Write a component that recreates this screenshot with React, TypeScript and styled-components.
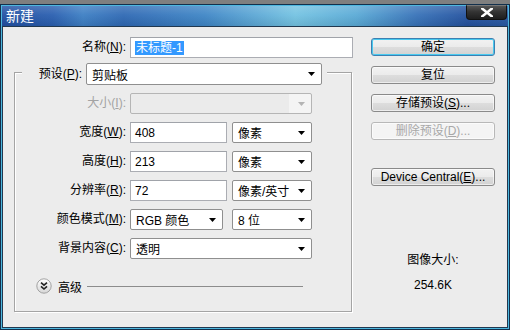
import styled, { createGlobalStyle } from "styled-components";

const GlobalStyle = createGlobalStyle`
  html, body {
    margin: 0;
    padding: 0;
    background: #7f7f7f;
  }
  body {
    font-family: "Liberation Sans", "Noto Sans CJK SC", sans-serif;
    font-size: 12px;
    color: #000;
  }
`;

function Arrow({ disabled }: { disabled?: boolean }) {
  return (
    <svg width="7" height="4" viewBox="0 0 7 4">
      <path d="M0 0 L7 0 L3.5 4 Z" fill={disabled ? "#b4b4b4" : "#000"} />
    </svg>
  );
}

function CloseGlyph() {
  return (
    <svg width="12" height="9" viewBox="0 0 12 9">
      <path d="M1 0.5 L11 8.5 M11 0.5 L1 8.5" stroke="#fff" strokeWidth="2.6" strokeLinecap="square" />
    </svg>
  );
}

function ChevronBall() {
  return (
    <svg width="16" height="16" viewBox="0 0 16 16">
      <defs>
        <linearGradient id="ball" x1="0" y1="0" x2="0" y2="1">
          <stop offset="0" stopColor="#ffffff" />
          <stop offset="1" stopColor="#d6d6d6" />
        </linearGradient>
      </defs>
      <circle cx="8" cy="8" r="7.2" fill="url(#ball)" stroke="#a2a2a2" strokeWidth="1" />
      <path d="M5 4.6 L8 7.2 L11 4.6 M5 8.4 L8 11 L11 8.4" fill="none" stroke="#222" strokeWidth="1.6" />
    </svg>
  );
}

function App() {
  return (
    <>
      <GlobalStyle />
      <Window>
        <TitleBar>
          <Title>新建</Title>
          <CloseButton>
            <CloseGlyph />
          </CloseButton>
        </TitleBar>
        <Body>
          <LeftCol>
            <NameRow>
              <Label>名称(<u>N</u>):</Label>
              <TextBox $width={223}>
                <Selection>未标题-1</Selection>
              </TextBox>
            </NameRow>
            <GroupBox>
              <GroupHeader>
                <HeaderLabel>预设(<u>P</u>):</HeaderLabel>
                <Select $width={236} $height={22}>
                  <span>剪贴板</span>
                  <Arrow />
                </Select>
              </GroupHeader>
              <FieldRow>
                <Label $disabled>大小(<u>I</u>):</Label>
                <Select $width={182} $disabled>
                  <span></span>
                  <Arrow disabled />
                </Select>
              </FieldRow>
              <FieldRow>
                <Label>宽度(<u>W</u>):</Label>
                <Pair>
                  <TextBox $width={97}>408</TextBox>
                  <Select $width={80}>
                    <span>像素</span>
                    <Arrow />
                  </Select>
                </Pair>
              </FieldRow>
              <FieldRow>
                <Label>高度(<u>H</u>):</Label>
                <Pair>
                  <TextBox $width={97}>213</TextBox>
                  <Select $width={80}>
                    <span>像素</span>
                    <Arrow />
                  </Select>
                </Pair>
              </FieldRow>
              <FieldRow>
                <Label>分辨率(<u>R</u>):</Label>
                <Pair>
                  <TextBox $width={97}>72</TextBox>
                  <Select $width={80}>
                    <span>像素/英寸</span>
                    <Arrow />
                  </Select>
                </Pair>
              </FieldRow>
              <FieldRow>
                <Label>颜色模式(<u>M</u>):</Label>
                <Pair $gap={9}>
                  <Select $width={93}>
                    <span>RGB 颜色</span>
                    <Arrow />
                  </Select>
                  <Select $width={80}>
                    <span>8 位</span>
                    <Arrow />
                  </Select>
                </Pair>
              </FieldRow>
              <FieldRow>
                <Label>背景内容(<u>C</u>):</Label>
                <Select $width={182}>
                  <span>透明</span>
                  <Arrow />
                </Select>
              </FieldRow>
              <AdvancedRow>
                <ChevronBall />
                <span>高级</span>
                <Rule />
              </AdvancedRow>
            </GroupBox>
          </LeftCol>
          <RightCol>
            <Button $default>确定</Button>
            <Button>复位</Button>
            <Button>存储预设(<u>S</u>)...</Button>
            <Button $disabled>删除预设(<u>D</u>)...</Button>
            <Button $gapTop={28}>Device Central(<u>E</u>)...</Button>
            <SizeCaption>图像大小:</SizeCaption>
            <SizeValue>254.6K</SizeValue>
          </RightCol>
        </Body>
      </Window>
    </>
  );
}

const Window = styled.div`
  box-sizing: border-box;
  width: 510px;
  height: 326px;
  margin-top: 4px;
  border: 1px solid #13304c;
  background: #4db7df;
  padding: 1px;
  display: flex;
  flex-direction: column;
`;

const TitleBar = styled.div`
  height: 20px;
  display: flex;
  justify-content: space-between;
  align-items: flex-start;
  background:
    linear-gradient(180deg, rgba(255,255,255,0.18) 0%, rgba(255,255,255,0.05) 45%, rgba(0,0,0,0.08) 100%),
    linear-gradient(90deg, #2250a2 0%, #2a5fb0 10%, #3d7fc4 16%, #2f69b4 24%, #3f86c6 40%, #74c3e2 58%, #5aaad6 70%, #3772b8 82%, #24529f 92%, #2a5aa4 100%);
`;

const Title = styled.div`
  padding-left: 4px;
  color: #fff;
  font-size: 14px;
  line-height: 20px;
`;

const CloseButton = styled.div`
  box-sizing: border-box;
  width: 41px;
  height: 15px;
  margin: -1px 1px 0 0;
  display: flex;
  align-items: center;
  justify-content: center;
  background: linear-gradient(180deg, #555 0%, #333 45%, #1e1e1e 100%);
  border: 1px solid #111;
  border-top-color: #777;
  border-radius: 0 0 4px 4px;
`;

const Body = styled.div`
  flex: 1;
  display: flex;
  background: #ececec;
  border: 1px solid #21384f;
`;

const LeftCol = styled.div`
  width: 368px;
  padding-top: 10px;
`;

const Label = styled.div<{ $disabled?: boolean }>`
  text-align: right;
  line-height: 21px;
  white-space: nowrap;
  color: ${(p) => (p.$disabled ? "#a3a3a3" : "#000")};
`;

const NameRow = styled.div`
  display: grid;
  grid-template-columns: 123px auto;
  column-gap: 4px;
  align-items: center;
`;

const TextBox = styled.div<{ $width: number }>`
  box-sizing: border-box;
  width: ${(p) => p.$width}px;
  height: 21px;
  padding: 0 4px;
  display: flex;
  align-items: center;
  background: #fff;
  border: 1px solid #abadb3;
  border-top-color: #a0a3a9;
`;

const Selection = styled.span`
  background: #3399ff;
  color: #fff;
  line-height: 14px;
  padding: 0 1px;
`;

const GroupBox = styled.div`
  box-sizing: border-box;
  width: 338px;
  margin: 14px 0 0 11px;
  padding-bottom: 17px;
  border: 1px solid #a4a4a4;
  box-shadow: 1px 1px 0 #fff, inset 1px 1px 0 #fff;
`;

const GroupHeader = styled.div`
  display: flex;
  align-items: center;
  gap: 4px;
  width: fit-content;
  margin: -10px 0 0 7px;
  padding-right: 5px;
  background: #ececec;
`;

const HeaderLabel = styled.div`
  width: 60px;
  text-align: right;
  line-height: 22px;
`;

const Select = styled.div<{ $width: number; $height?: number; $disabled?: boolean }>`
  box-sizing: border-box;
  width: ${(p) => p.$width}px;
  height: ${(p) => p.$height ?? 21}px;
  padding: 0 6px 0 5px;
  display: flex;
  align-items: center;
  justify-content: space-between;
  white-space: nowrap;
  border: 1px solid ${(p) => (p.$disabled ? "#b5b5b5" : "#8f8f8f")};
  border-radius: 2px;
  background: ${(p) =>
    p.$disabled ? "linear-gradient(90deg, #ebebeb 0, #ebebeb 88%, #f4f4f4 88%)" : "#fff"};
`;

const FieldRow = styled.div`
  display: grid;
  grid-template-columns: 111px auto;
  column-gap: 4px;
  align-items: center;
  margin-top: 8px;
`;

const Pair = styled.div<{ $gap?: number }>`
  display: flex;
  gap: ${(p) => p.$gap ?? 5}px;
`;

const AdvancedRow = styled.div`
  display: flex;
  align-items: center;
  gap: 6px;
  height: 16px;
  margin-top: 19px;
  padding-left: 21px;
`;

const Rule = styled.div`
  width: 216px;
  height: 1px;
  margin-left: -1px;
  background: #8c8c8c;
`;

const RightCol = styled.div`
  width: 124px;
  padding-top: 11px;
  display: flex;
  flex-direction: column;
`;

const Button = styled.div<{ $default?: boolean; $disabled?: boolean; $gapTop?: number }>`
  box-sizing: border-box;
  width: 124px;
  height: 18px;
  margin-top: ${(p) => p.$gapTop ?? 10}px;
  &:first-child {
    margin-top: 0;
  }
  display: flex;
  align-items: center;
  justify-content: center;
  line-height: 16px;
  white-space: nowrap;
  color: ${(p) => (p.$disabled ? "#a8a8a8" : "#000")};
  border: 1px solid ${(p) => (p.$disabled ? "#b8b8b8" : p.$default ? "#3c7fb1" : "#8a8a8a")};
  border-radius: 3px;
  background: ${(p) =>
    p.$disabled
      ? "#f4f4f4"
      : "linear-gradient(180deg, #f2f2f2 0%, #ebebeb 50%, #dddddd 51%, #d2d2d2 100%)"};
  box-shadow: ${(p) => (p.$default ? "inset 0 0 0 1px #48c9ef" : "inset 0 0 0 1px rgba(255,255,255,0.6)")};
`;

const SizeCaption = styled.div`
  margin-top: 67px;
  text-align: center;
  line-height: 14px;
`;

const SizeValue = styled.div`
  margin-top: 11px;
  text-align: center;
  line-height: 14px;
`;

export default App;
